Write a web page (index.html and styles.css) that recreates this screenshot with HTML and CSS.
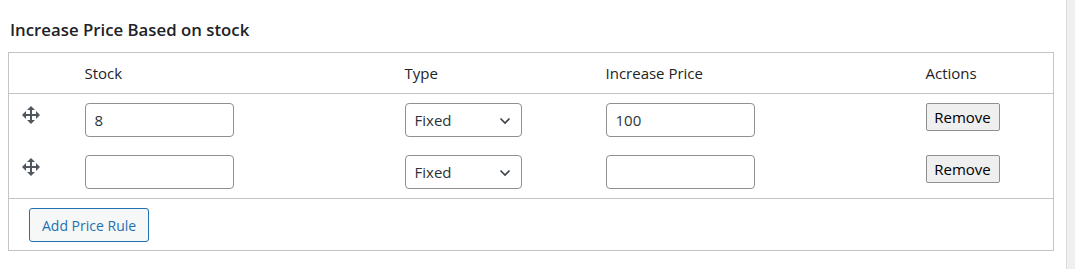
FILE: index.html
```html
<!DOCTYPE html>
<html>
<head lang="en">
    <meta charset="UTF-8">
    <title>Increase Price Based on stock</title>
    <link rel="stylesheet" href="styles.css">
</head>
<body>
    <!--main area-->
    <div class="main">
        <h2 class="title">Increase Price Based on stock</h2>
        <table class="rules">
            <thead>
                <tr>
                    <th class="col-sort"></th>
                    <th class="col-stock">Stock</th>
                    <th class="col-type">Type</th>
                    <th class="col-price">Increase Price</th>
                    <th class="col-actions">Actions</th>
                </tr>
            </thead>
            <tbody>
                <tr>
                    <td class="col-sort">
                        <svg class="move" width="20" height="20" viewBox="0 0 20 20"><path d="M19 10l-4 4v-3h-4v4h3l-4 4-4-4h3v-4H5v3l-4-4 4-4v3h4V5H6l4-4 4 4h-3v4h4V6z"/></svg>
                    </td>
                    <td><input type="text" class="field" value="8"></td>
                    <td>
                        <span class="select-wrap">
                            <select class="field select"><option>Fixed</option><option>Percent</option></select>
                            <svg class="chev" width="12" height="8" viewBox="0 0 12 8"><path d="M1.5 1.5l4.5 4.5 4.5-4.5" fill="none" stroke="#3c434a" stroke-width="1.6"/></svg>
                        </span>
                    </td>
                    <td><input type="text" class="field" value="100"></td>
                    <td><button class="remove">Remove</button></td>
                </tr>
                <tr>
                    <td class="col-sort">
                        <svg class="move" width="20" height="20" viewBox="0 0 20 20"><path d="M19 10l-4 4v-3h-4v4h3l-4 4-4-4h3v-4H5v3l-4-4 4-4v3h4V5H6l4-4 4 4h-3v4h4V6z"/></svg>
                    </td>
                    <td><input type="text" class="field" value=""></td>
                    <td>
                        <span class="select-wrap">
                            <select class="field select"><option>Fixed</option><option>Percent</option></select>
                            <svg class="chev" width="12" height="8" viewBox="0 0 12 8"><path d="M1.5 1.5l4.5 4.5 4.5-4.5" fill="none" stroke="#3c434a" stroke-width="1.6"/></svg>
                        </span>
                    </td>
                    <td><input type="text" class="field" value=""></td>
                    <td><button class="remove">Remove</button></td>
                </tr>
            </tbody>
            <tfoot>
                <tr>
                    <td colspan="5" class="foot"><button class="add">Add Price Rule</button></td>
                </tr>
            </tfoot>
        </table>
    </div>
    <!--right edge-->
    <div class="edge"></div>
</body>
</html>
```

FILE: styles.css
```css
* {
    padding: 0;
    margin: 0;
    box-sizing: border-box;
}

body {
    display: flex;
    min-height: 269px;
    background: #fff;
    font-family: "Segoe UI", "Open Sans", "Noto Sans", sans-serif;
    font-size: 15px;
    color: #1d2327;
}

.main {
    flex: 1;
    padding: 19px 12px 0 8px;
}

.edge {
    width: 9px;
    background: #f0f0f0;
    border-left: 1px solid #dcdcde;
}

.title {
    font-size: 16.8px;
    font-weight: 600;
    line-height: 22px;
    margin-left: 2px;
    margin-bottom: 11px;
    color: #1d2327;
}

.rules {
    width: 100%;
    border: 1px solid #c3c4c7;
    border-collapse: collapse;
}

.rules th {
    height: 41px;
    text-align: left;
    font-weight: 400;
    padding: 0 10px;
    border-bottom: 1px solid #c3c4c7;
    vertical-align: middle;
}

.rules td {
    padding: 9px 10px;
    vertical-align: top;
    height: 52px;
}

.col-sort {
    width: 66px;
}

.col-stock {
    width: 320px;
}

.col-type {
    width: 201px;
}

.col-price {
    width: 320px;
}

.rules td.col-sort {
    padding-left: 12px;
    padding-top: 11px;
}

.move {
    display: block;
    fill: #50575e;
}

.field {
    display: block;
    width: 149px;
    height: 34px;
    padding: 0 9px;
    border: 1px solid #8c8f94;
    border-radius: 4px;
    background: #fff;
    font-family: inherit;
    font-size: 15px;
    color: #2c3338;
    outline: none;
}

.select-wrap {
    display: block;
    position: relative;
    width: 117px;
}

.select {
    width: 117px;
    appearance: none;
    -webkit-appearance: none;
    padding-right: 24px;
}

.chev {
    position: absolute;
    right: 11px;
    top: 14px;
    pointer-events: none;
}

.remove {
    display: block;
    width: 74px;
    height: 28px;
    border: 1px solid #8f8f8f;
    border-radius: 2px;
    background: #efefef;
    font-family: inherit;
    font-size: 15px;
    color: #000;
}

.rules td.foot {
    height: 51px;
    padding: 9px 20px 8px;
    border-top: 1px solid #c3c4c7;
}

.add {
    height: 34px;
    padding: 0 12px;
    border: 1px solid #2271b1;
    border-radius: 3px;
    background: #f6f7f7;
    font-family: inherit;
    font-size: 14px;
    color: #2271b1;
}
```
